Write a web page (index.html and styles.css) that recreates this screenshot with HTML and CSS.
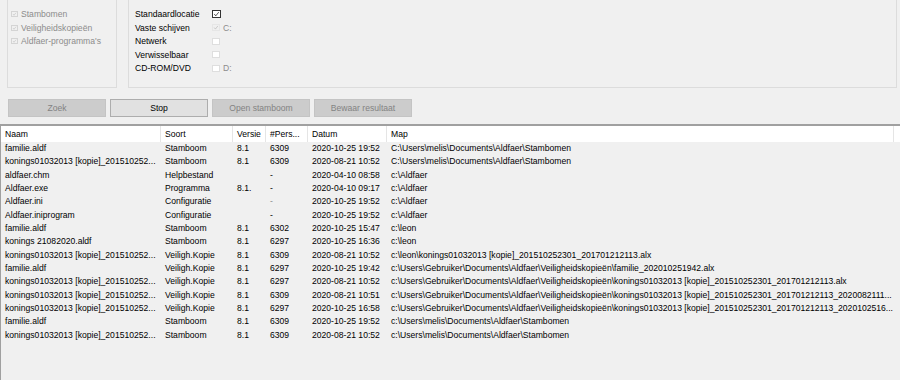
FILE: index.html
```html
<!DOCTYPE html>
<html lang="nl">
<head>
  <meta charset="UTF-8">
  <title>Zoeken</title>
  <link rel="stylesheet" href="styles.css">
</head>
<body>
  <!-- zoekopties -->
  <div class="search">
    <div class="group group-what">
      <div class="group-title">Wat zoeken</div>
      <ul class="opts">
        <li><span class="box box-off"><svg viewBox="0 0 8 8"><polyline points="1,4 3,6.5 7,1.5"/></svg></span><span class="muted">Stambomen</span></li>
        <li><span class="box box-off"><svg viewBox="0 0 8 8"><polyline points="1,4 3,6.5 7,1.5"/></svg></span><span class="muted">Veiligheidskopieën</span></li>
        <li><span class="box box-off"><svg viewBox="0 0 8 8"><polyline points="1,4 3,6.5 7,1.5"/></svg></span><span class="muted">Aldfaer-programma's</span></li>
      </ul>
    </div>
    <div class="group group-where">
      <div class="group-title">Waar zoeken</div>
      <div class="where">
        <span>Standaardlocatie</span>
        <span class="box box-on"><svg viewBox="0 0 8 8"><polyline points="1,4 3,6.5 7,1.5"/></svg></span>
        <span></span>

        <span>Vaste schijven</span>
        <span class="box box-off box-flat"><svg viewBox="0 0 8 8"><polyline points="1,4 3,6.5 7,1.5"/></svg></span>
        <span class="muted">C:</span>

        <span>Netwerk</span>
        <span class="box"></span>
        <span></span>

        <span>Verwisselbaar</span>
        <span class="box"></span>
        <span></span>

        <span>CD-ROM/DVD</span>
        <span class="box"></span>
        <span class="muted">D:</span>
      </div>
    </div>
  </div>

  <!-- knoppen -->
  <div class="actions">
    <button class="btn" disabled>Zoek</button>
    <button class="btn btn-active">Stop</button>
    <button class="btn" disabled>Open stamboom</button>
    <button class="btn" disabled>Bewaar resultaat</button>
  </div>

  <!-- resultaten -->
  <div class="list">
    <table class="results">
      <colgroup>
        <col class="c-name"><col class="c-kind"><col class="c-ver"><col class="c-pers"><col class="c-date"><col class="c-map"><col>
      </colgroup>
      <thead>
        <tr><th>Naam</th><th>Soort</th><th>Versie</th><th>#Pers...</th><th>Datum</th><th>Map</th><th class="filler"></th></tr>
      </thead>
      <tbody>
        <tr><td>familie.aldf</td><td>Stamboom</td><td>8.1</td><td>6309</td><td>2020-10-25 19:52</td><td>C:\Users\melis\Documents\Aldfaer\Stambomen</td><td></td></tr>
        <tr><td>konings01032013 [kopie]_201510252...</td><td>Stamboom</td><td>8.1</td><td>6309</td><td>2020-08-21 10:52</td><td>C:\Users\melis\Documents\Aldfaer\Stambomen</td><td></td></tr>
        <tr><td>aldfaer.chm</td><td>Helpbestand</td><td></td><td>-</td><td>2020-04-10 08:58</td><td>c:\Aldfaer</td><td></td></tr>
        <tr><td>Aldfaer.exe</td><td>Programma</td><td>8.1.</td><td>-</td><td>2020-04-10 09:17</td><td>c:\Aldfaer</td><td></td></tr>
        <tr><td>Aldfaer.ini</td><td>Configuratie</td><td></td><td class="muted">-</td><td>2020-10-25 19:52</td><td>c:\Aldfaer</td><td></td></tr>
        <tr><td>Aldfaer.iniprogram</td><td>Configuratie</td><td></td><td>-</td><td>2020-10-25 19:52</td><td>c:\Aldfaer</td><td></td></tr>
        <tr><td>familie.aldf</td><td>Stamboom</td><td>8.1</td><td>6302</td><td>2020-10-25 15:47</td><td>c:\leon</td><td></td></tr>
        <tr><td>konings 21082020.aldf</td><td>Stamboom</td><td>8.1</td><td>6297</td><td>2020-10-25 16:36</td><td>c:\leon</td><td></td></tr>
        <tr><td>konings01032013 [kopie]_201510252...</td><td>Veiligh.Kopie</td><td>8.1</td><td>6309</td><td>2020-08-21 10:52</td><td>c:\leon\konings01032013 [kopie]_201510252301_201701212113.alx</td><td></td></tr>
        <tr><td>familie.aldf</td><td>Veiligh.Kopie</td><td>8.1</td><td>6297</td><td>2020-10-25 19:42</td><td>c:\Users\Gebruiker\Documents\Aldfaer\Veiligheidskopieën\familie_202010251942.alx</td><td></td></tr>
        <tr><td>konings01032013 [kopie]_201510252...</td><td>Veiligh.Kopie</td><td>8.1</td><td>6297</td><td>2020-08-21 10:52</td><td>c:\Users\Gebruiker\Documents\Aldfaer\Veiligheidskopieën\konings01032013 [kopie]_201510252301_201701212113.alx</td><td></td></tr>
        <tr><td>konings01032013 [kopie]_201510252...</td><td>Veiligh.Kopie</td><td>8.1</td><td>6309</td><td>2020-08-21 10:51</td><td>c:\Users\Gebruiker\Documents\Aldfaer\Veiligheidskopieën\konings01032013 [kopie]_201510252301_201701212113_2020082111...</td><td></td></tr>
        <tr><td>konings01032013 [kopie]_201510252...</td><td>Veiligh.Kopie</td><td>8.1</td><td>6297</td><td>2020-10-25 16:58</td><td>c:\Users\Gebruiker\Documents\Aldfaer\Veiligheidskopieën\konings01032013 [kopie]_201510252301_201701212113_2020102516...</td><td></td></tr>
        <tr><td>familie.aldf</td><td>Stamboom</td><td>8.1</td><td>6309</td><td>2020-10-25 19:52</td><td>c:\Users\melis\Documents\Aldfaer\Stambomen</td><td></td></tr>
        <tr><td>konings01032013 [kopie]_201510252...</td><td>Stamboom</td><td>8.1</td><td>6309</td><td>2020-08-21 10:52</td><td>c:\Users\melis\Documents\Aldfaer\Stambomen</td><td></td></tr>
      </tbody>
    </table>
  </div>
</body>
</html>
```

FILE: styles.css
```css
* {margin: 0; padding: 0; box-sizing: border-box;}
body {
  height: 100vh;
  overflow: hidden;
  display: flex;
  flex-direction: column;
  background-color: #f0f0f0;
  color: #000;
  font-family: "Liberation Sans", Arial, sans-serif;
  font-size: 8.6px;
}
.muted {
  color: #8c8c8c;
}

/* groepen bovenaan (bovenrand valt buiten beeld) */
.search {
  display: flex;
  gap: 11px;
  margin-top: -8px;
  padding: 0 3px 0 7px;
}
.group {
  height: 96px;
  border: 1px solid #dcdcdc;
}
.group-what {
  width: 110px;
  padding-left: 3px;
}
.group-where {
  flex: 1;
  padding-left: 6px;
}
.group-title {
  height: 9px;
  line-height: 9px;
  padding-left: 1px;
  margin-bottom: 5.5px;
}
.opts {
  list-style: none;
}
.opts li {
  display: flex;
  align-items: center;
  gap: 3px;
  height: 13.5px;
}
.where {
  display: grid;
  grid-template-columns: 75px 9px auto;
  grid-auto-rows: 13.5px;
  column-gap: 2px;
  align-items: center;
}

/* vinkjes */
.box {
  display: inline-block;
  width: 8px;
  height: 7px;
  border: 1px solid #dedede;
  background-color: #fff;
}
.box svg {
  display: block;
  width: 100%;
  height: 100%;
  fill: none;
  stroke-width: 1;
}
.box-on {
  width: 9px;
  height: 8px;
  border-color: #333;
  stroke: #222;
}
.box-off {
  width: 7px;
  height: 6px;
  border-color: #d4d4d4;
  background-color: #f0f0f0;
  stroke: #b4b4b4;
}
.box-flat {
  width: 8px;
  height: 7px;
  border-color: #e6e6e6;
}

/* knoppen */
.actions {
  display: flex;
  gap: 4px;
  padding: 11px 0 0 8px;
}
.btn {
  width: 98px;
  height: 18px;
  font: inherit;
  color: #838383;
  background-color: #cccccc;
  border: 1px solid #c4c4c4;
}
.btn-active {
  color: #000;
  background-color: #e1e1e1;
  border-color: #adadad;
}

/* lijst */
.list {
  flex: 1;
  margin-top: 7px;
  border-top: 2px solid #a0a0a0;
  border-left: 1px solid #a0a0a0;
  overflow: hidden;
}
.results {
  width: 899px;
  table-layout: fixed;
  border-spacing: 0;
}
.c-name {width: 160px;}
.c-kind {width: 72px;}
.c-ver {width: 33px;}
.c-pers {width: 42px;}
.c-date {width: 79px;}
.c-map {width: 507px;}
.results th {
  height: 16px;
  padding: 0 4px;
  text-align: left;
  font-weight: normal;
  background-color: #fff;
  border-right: 1px solid #e5e5e5;
  white-space: nowrap;
  overflow: hidden;
}
.results th.filler {
  border-right: none;
}
.results td {
  height: 13.33px;
  line-height: 13px;
  padding: 0 4px;
  white-space: nowrap;
  overflow: hidden;
}
```
